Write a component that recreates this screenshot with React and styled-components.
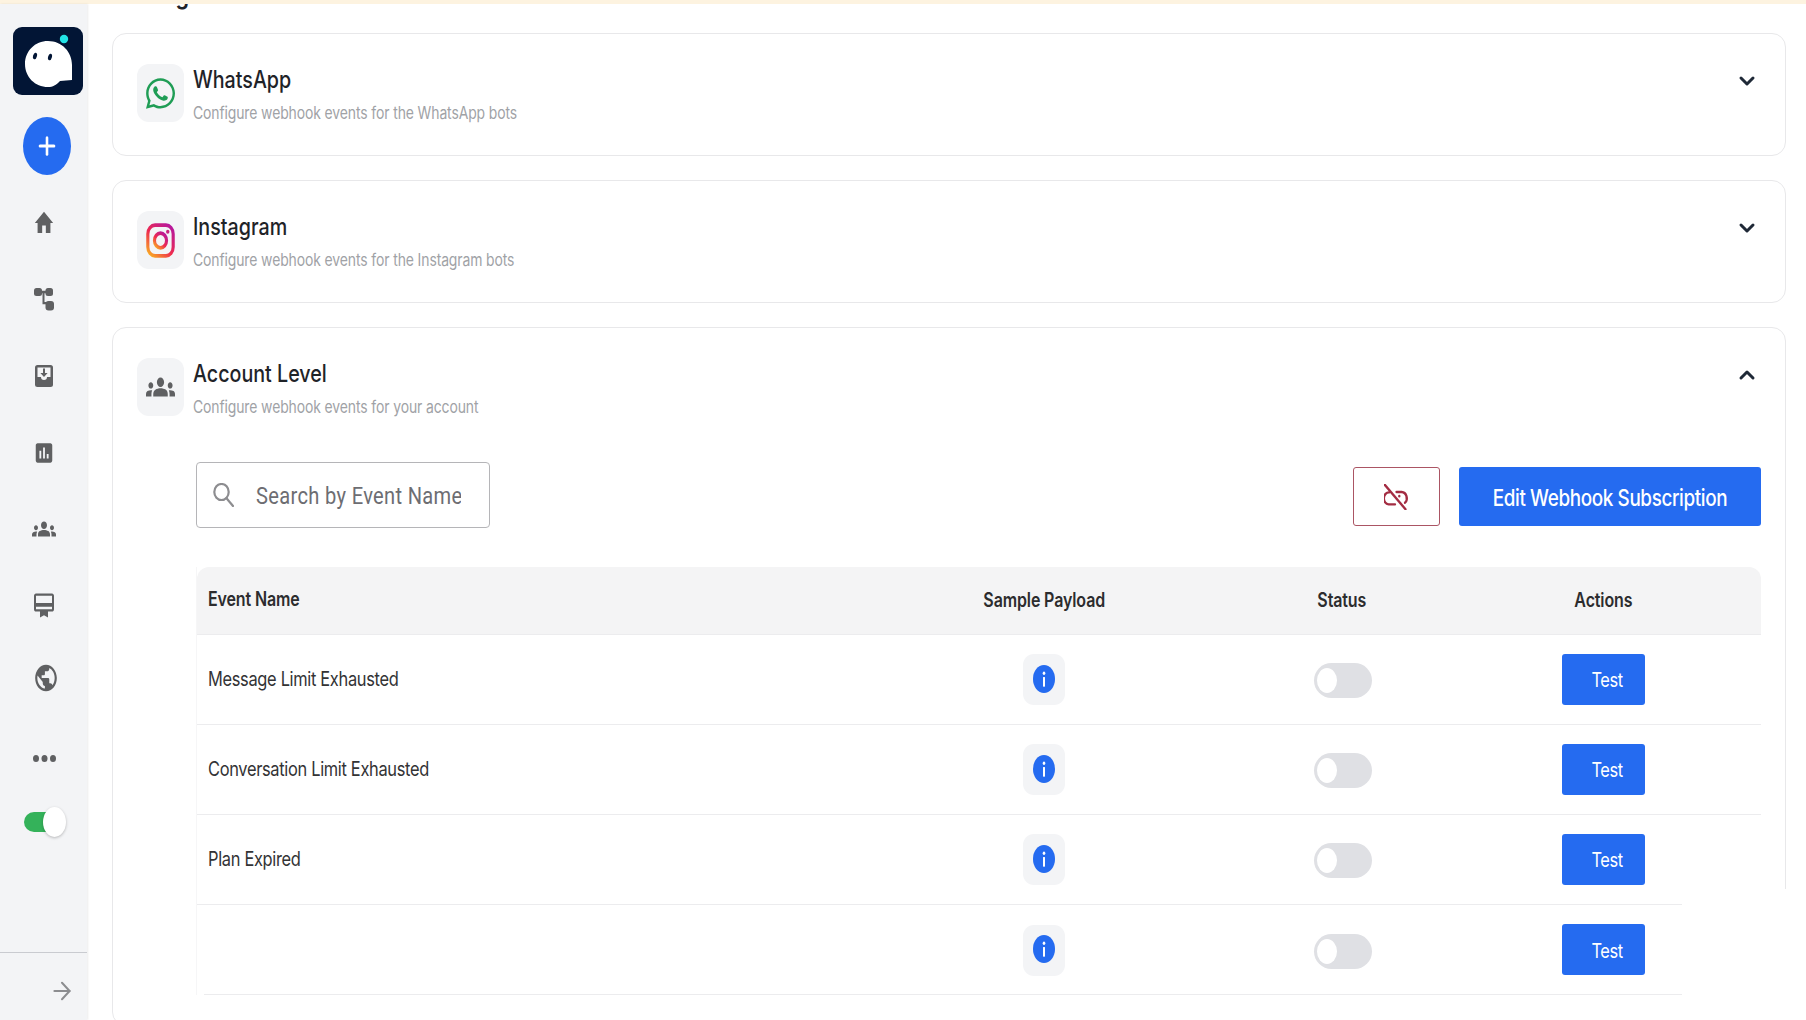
import React from "react";
import styled, { createGlobalStyle } from "styled-components";
import { FaWhatsapp } from "react-icons/fa";
import { MdHome, MdGroups, MdPublic, MdAssessment, MdCardMembership } from "react-icons/md";
import { ArrowRight, ChevronDown, ChevronUp, Plus } from "lucide-react";

const BLUE = "#256bf0";
const ICON_GREY = "#5f6062";

const GlobalStyle = createGlobalStyle`
  html, body { margin: 0; padding: 0; background: #fff; }
  body { font-family: Inter, "Liberation Sans", sans-serif; }
  * { box-sizing: border-box; }
`;

const Page = styled.div`
  position: relative;
  width: 100%;
  height: 100vh;
  display: flex;
  flex-direction: column;
  overflow: hidden;
`;

const Banner = styled.div`
  height: 4px;
  flex: none;
  background: #fdf3e0;
`;

const Body = styled.div`
  flex: 1;
  min-height: 0;
  display: flex;
`;

/* the capture is narrower than it is tall, so glyphs get squeezed the same way */
const Squeezed = styled.span`
  display: inline-block;
  white-space: nowrap;
  transform: scaleX(0.82);
  transform-origin: ${(p) => (p.$center ? "center" : "left center")};
`;

const IconFrame = styled.span`
  display: block;
  flex: none;
  width: ${(p) => p.$w}px;
  height: ${(p) => p.$h}px;
  svg {
    display: block;
    width: 100%;
    height: 100%;
  }
`;

const Sidebar = styled.aside`
  width: 87px;
  flex: none;
  display: flex;
  flex-direction: column;
  align-items: flex-start;
  padding-top: 23px;
  background: #f3f4f6;
  box-shadow: 1px 0 2px rgba(0, 0, 0, 0.08);
  z-index: 1;
`;

const Logo = styled.div`
  width: 70px;
  height: 68px;
  margin-left: 13px;
  border-radius: 9px;
  background: #021535;
  svg { display: block; }
`;

const AddButton = styled.button`
  width: 48px;
  height: 58px;
  margin: 22px 0 0 23px;
  padding: 0;
  border: none;
  border-radius: 50%;
  background: ${BLUE};
  color: #fff;
  display: flex;
  align-items: center;
  justify-content: center;
`;

const NavList = styled.nav`
  width: 88px;
  margin-top: 10px;
  display: flex;
  flex-direction: column;
`;

const NavItem = styled.div`
  height: 76.5px;
  margin: ${(p) => -(p.$lift || 0)}px 0 ${(p) => p.$lift || 0}px;
  padding-left: ${(p) => p.$nudge || 0}px;
  display: flex;
  align-items: center;
  justify-content: center;
  color: ${ICON_GREY};
`;

const SideSwitch = styled.div`
  position: relative;
  width: 36px;
  height: 20px;
  margin: 15px 0 0 24px;
  border-radius: 10px 0 0 10px;
  background: #34b25a;
`;

const SideKnob = styled.span`
  position: absolute;
  top: -5px;
  right: -6px;
  width: 23px;
  height: 30px;
  border-radius: 50%;
  background: #fff;
  box-shadow: 0 1px 3px rgba(0, 0, 0, 0.25);
`;

const SideFooter = styled.div`
  width: 100%;
  margin-top: auto;
  height: 68px;
  display: flex;
  align-items: center;
  justify-content: flex-end;
  padding: 8px 12px 0 0;
  border-top: 1px solid #c9cbd0;
  color: #8c8d90;
`;

const Main = styled.main`
  flex: 1;
  min-width: 0;
  overflow: hidden;
  padding: 0 20px 0 25px;
  background: #fff;
`;

const PageTitle = styled.h1`
  margin: -25px 0 24px;
  height: 30px;
  font-size: 26.5px;
  line-height: 30px;
  font-weight: 600;
  letter-spacing: 0.6px;
  color: #1f2328;
`;

const Card = styled.section`
  min-height: 123px;
  margin-bottom: 24px;
  padding: 30px 24px;
  border: 1px solid #e8e8ea;
  border-radius: 14px;
  background: #fff;
`;

const CardHeader = styled.header`
  display: flex;
  align-items: flex-start;
  gap: 9px;
`;

const IconTile = styled.div`
  width: 47px;
  height: 58px;
  flex: none;
  display: flex;
  align-items: center;
  justify-content: center;
  border-radius: 12px;
  background: #f3f4f6;
  color: ${ICON_GREY};
`;

const CardText = styled.div`
  display: flex;
  flex-direction: column;
  padding-top: 3px;
`;

const CardTitle = styled.h2`
  margin: 0;
  font-size: 24px;
  line-height: 26px;
  font-weight: 500;
  color: #1f2328;
`;

const CardSub = styled.p`
  margin: 9px 0 0;
  font-size: 17px;
  line-height: 22px;
  letter-spacing: -0.13px;
  color: #a0a2a6;
`;

const Caret = styled.div`
  margin: 5px 2px 0 auto;
  color: #1f2937;
  display: flex;
`;

const CardBody = styled.div`
  margin: 44px 0 0 59px;
`;

const Toolbar = styled.div`
  display: flex;
  align-items: center;
  justify-content: space-between;
`;

const SearchBox = styled.label`
  width: 294px;
  height: 66px;
  display: flex;
  align-items: center;
  gap: 22px;
  padding: 0 0 0 16px;
  border: 1px solid #b5b5b8;
  border-radius: 4px;
  overflow: hidden;
  svg { flex: none; }
`;

const SearchInput = styled.input`
  flex: none;
  width: 250px;
  border: none;
  outline: none;
  padding: 0;
  background: transparent;
  font-family: Roboto, "Liberation Sans", sans-serif;
  font-size: 24.5px;
  letter-spacing: 0.4px;
  transform: scaleX(0.82);
  transform-origin: left center;
  &::placeholder { color: #6d6d72; opacity: 1; }
`;

const ToolbarActions = styled.div`
  display: flex;
  gap: 19px;
  padding-top: 3px;
`;

const UnlinkButton = styled.button`
  width: 87px;
  height: 59px;
  padding: 0;
  display: flex;
  align-items: center;
  justify-content: center;
  border: 1px solid #ab5564;
  border-radius: 3px;
  background: #fff;
  color: #a32c42;
`;

const PrimaryButton = styled.button`
  width: 302px;
  height: 59px;
  border: none;
  border-radius: 3px;
  background: ${BLUE};
  color: #fff;
  font-family: Inter, "Liberation Sans", sans-serif;
  font-size: 23px;
  font-weight: 500;
  letter-spacing: -0.45px;
  display: flex;
  align-items: center;
  justify-content: center;
  padding: 3px 0 0;
`;

const Table = styled.div`
  margin-top: 39px;
  border-left: 1px solid #f6f6f7;
`;

const columns = "747px 200px 395px 128px 95px";

const HeadRow = styled.div`
  height: 68px;
  display: grid;
  grid-template-columns: ${columns};
  align-items: center;
  padding-bottom: 2px;
  border-radius: 12px 12px 0 0;
  border-bottom: 1px solid #ececee;
  background: #f4f4f5;
  font-size: 19.5px;
  font-weight: 600;
  letter-spacing: -0.15px;
  color: #2c2c2e;
`;

const Row = styled.div`
  height: 90px;
  display: grid;
  grid-template-columns: ${columns};
  align-items: center;
  background: ${(p) => (p.$last ? "linear-gradient(#ececee, #ececee) 7px 100% / 100% 1px no-repeat" : "none")};
  border-bottom: ${(p) => (p.$last ? "none" : "1px solid #ececee")};
  font-size: 20px;
  letter-spacing: -0.38px;
  color: #333335;
`;

const NameCell = styled.div`
  padding-left: 11px;
  margin-top: -1px;
`;

const Cell = styled.div`
  display: flex;
  justify-content: center;
`;

const InfoTile = styled.div`
  width: 42px;
  height: 51px;
  display: flex;
  align-items: center;
  justify-content: center;
  padding-bottom: 2px;
  border-radius: 11px;
  background: #f3f4f6;
`;

const Switch = styled.div`
  width: 58px;
  height: 35px;
  margin-top: 2px;
  padding: 5px 3px;
  border-radius: 18px;
  background: #dfe0e4;
  transform: translateX(1px);
`;

const Knob = styled.span`
  display: block;
  width: 20px;
  height: 25px;
  border-radius: 50%;
  background: #fff;
`;

const TestButton = styled.button`
  width: 83px;
  height: 51px;
  margin-top: -1px;
  padding: 2px 0 0 8px;
  border: none;
  border-radius: 3px;
  background: ${BLUE};
  color: #fff;
  font-family: Inter, "Liberation Sans", sans-serif;
  font-size: 20px;
  letter-spacing: -0.5px;
`;

/* white patch that hides the lower right of the capture */
const CornerPatch = styled.div`
  position: absolute;
  right: 0;
  bottom: 0;
  width: 124px;
  height: 131px;
  background: #fff;
  z-index: 2;
`;

const Stretch = ({ as: Icon, w, h, ...rest }) => (
  <IconFrame $w={w} $h={h}>
    <Icon preserveAspectRatio="none" {...rest} />
  </IconFrame>
);

const GhostLogo = () => (
  <svg width="70" height="68" viewBox="0 0 70 68">
    <path d="M35 14C49 14 59 25 59 38V53L47 54C43 58 40 60 35 60C22 60 12 50 12 37C12 24 22 14 35 14Z" fill="#fff" />
    <ellipse cx="22" cy="29" rx="1.9" ry="3.4" fill="#021535" transform="rotate(15 22 29)" />
    <ellipse cx="37" cy="30" rx="1.9" ry="3.4" fill="#021535" transform="rotate(15 37 30)" />
    <circle cx="51" cy="12" r="4.2" fill="#22e3e6" />
  </svg>
);

const HubIcon = () => (
  <svg width="20" height="23" viewBox="0 0 20 23" fill={ICON_GREY}>
    <rect x="0" y="0" width="8" height="8" rx="2.5" />
    <rect x="11.5" y="0" width="7.5" height="8" rx="2.5" />
    <rect x="11.5" y="13" width="8.5" height="9.5" rx="3" />
    <path d="M7 2.8h5v2.4H7zM8.5 5h2v9H13v2.2H8.5z" />
  </svg>
);

const InboxIcon = () => (
  <svg width="18" height="22" viewBox="0 0 18 22">
    <rect width="18" height="22" rx="2.5" fill={ICON_GREY} />
    <path d="M2.5 2.5h13v9.5h-3.5a3 3 0 0 1-6 0H2.5z" fill="#f3f4f6" />
    <path d="M8 3.5h2v4.5h2.6L9 12 5.4 8H8z" fill={ICON_GREY} />
  </svg>
);

const DotsIcon = () => (
  <svg width="23" height="7" viewBox="0 0 23 7" fill={ICON_GREY}>
    <ellipse cx="3" cy="3.5" rx="3" ry="3.5" />
    <ellipse cx="11.5" cy="3.5" rx="3" ry="3.5" />
    <ellipse cx="20" cy="3.5" rx="3" ry="3.5" />
  </svg>
);

const SearchGlyph = () => (
  <svg width="21" height="24" viewBox="0 0 21 24" fill="none" stroke="#8d8d90" strokeWidth="2.2">
    <ellipse cx="8.5" cy="9" rx="7.2" ry="8" />
    <path d="M13.5 15.2L20 23" strokeLinecap="round" />
  </svg>
);

const UnlinkGlyph = () => (
  <svg width="25" height="26" viewBox="0 0 25 26" fill="none" stroke="currentColor" strokeWidth="2.3" strokeLinecap="round">
    <path d="M5.2 8.4A5 6 0 0 0 4.6 20.4H11" />
    <path d="M12.5 8H17.6A5.4 6.2 0 0 1 21 18.8" />
    <path d="M0.8 0.8L21.5 25.2" />
    <path d="M15.3 12v0.4" />
  </svg>
);

const InstagramIcon = () => (
  <svg width="29" height="35" viewBox="0 0 24 24" preserveAspectRatio="none" fill="none">
    <defs>
      <linearGradient id="igGrad" x1="0.1" y1="1" x2="0.9" y2="0">
        <stop offset="0" stopColor="#f9a825" />
        <stop offset="0.45" stopColor="#ee2a4f" />
        <stop offset="1" stopColor="#b5179e" />
      </linearGradient>
    </defs>
    <rect x="1.5" y="1.5" width="21" height="21" rx="6" stroke="url(#igGrad)" strokeWidth="2.6" />
    <circle cx="12" cy="12" r="5" stroke="url(#igGrad)" strokeWidth="2.6" />
    <circle cx="18" cy="6" r="1.4" fill="#c9237f" />
  </svg>
);

const InfoIcon = () => (
  <svg width="22" height="28" viewBox="0 0 22 22" preserveAspectRatio="none">
    <circle cx="11" cy="11" r="11" fill={BLUE} />
    <rect x="10" y="9.5" width="2" height="7.5" fill="#fff" />
    <circle cx="11" cy="6.5" r="1.3" fill="#fff" />
  </svg>
);

const navItems = [
  { icon: <Stretch as={MdHome} w={22} h={30} /> },
  { icon: <HubIcon /> },
  { icon: <InboxIcon /> },
  { icon: <Stretch as={MdAssessment} w={22} h={26} /> },
  { icon: <Stretch as={MdGroups} w={24} h={30} /> },
  { icon: <Stretch as={MdCardMembership} w={24} h={29} /> },
  { icon: <Stretch as={MdPublic} w={26} h={32} />, lift: 4, nudge: 3 },
  { icon: <DotsIcon /> },
];

const events = ["Message Limit Exhausted", "Conversation Limit Exhausted", "Plan Expired", ""];

function CardHead({ icon, title, sub, open }) {
  return (
    <CardHeader>
      <IconTile>{icon}</IconTile>
      <CardText>
        <CardTitle>
          <Squeezed>{title}</Squeezed>
        </CardTitle>
        <CardSub>
          <Squeezed>{sub}</Squeezed>
        </CardSub>
      </CardText>
      <Caret>
        <Stretch as={open ? ChevronUp : ChevronDown} w={24} h={24} strokeWidth={3} />
      </Caret>
    </CardHeader>
  );
}

export default function App() {
  return (
    <Page>
      <GlobalStyle />
      <Banner />
      <Body>
        <Sidebar>
          <Logo>
            <GhostLogo />
          </Logo>
          <AddButton aria-label="Create">
            <Stretch as={Plus} w={24} h={28} strokeWidth={2.6} />
          </AddButton>
          <NavList>
            {navItems.map((item, i) => (
              <NavItem key={i} $lift={item.lift} $nudge={item.nudge}>
                {item.icon}
              </NavItem>
            ))}
          </NavList>
          <SideSwitch>
            <SideKnob />
          </SideSwitch>
          <SideFooter>
            <Stretch as={ArrowRight} w={26} h={28} strokeWidth={1.9} />
          </SideFooter>
        </Sidebar>
        <Main>
          <PageTitle>
            <Squeezed>Settings</Squeezed>
          </PageTitle>
          <Card>
            <CardHead
              icon={<Stretch as={FaWhatsapp} w={29} h={35} color="#1f9d55" />}
              title="WhatsApp"
              sub="Configure webhook events for the WhatsApp bots"
            />
          </Card>
          <Card>
            <CardHead
              icon={<InstagramIcon />}
              title="Instagram"
              sub="Configure webhook events for the Instagram bots"
            />
          </Card>
          <Card>
            <CardHead
              icon={<Stretch as={MdGroups} w={29} h={38} />}
              title="Account Level"
              sub="Configure webhook events for your account"
              open
            />
            <CardBody>
              <Toolbar>
                <SearchBox>
                  <SearchGlyph />
                  <SearchInput placeholder="Search by Event Name" />
                </SearchBox>
                <ToolbarActions>
                  <UnlinkButton aria-label="Unlink webhook">
                    <UnlinkGlyph />
                  </UnlinkButton>
                  <PrimaryButton>
                    <Squeezed $center>Edit Webhook Subscription</Squeezed>
                  </PrimaryButton>
                </ToolbarActions>
              </Toolbar>
              <Table>
                <HeadRow>
                  <NameCell>
                    <Squeezed>Event Name</Squeezed>
                  </NameCell>
                  <Cell>
                    <Squeezed $center>Sample Payload</Squeezed>
                  </Cell>
                  <Cell>
                    <Squeezed $center>Status</Squeezed>
                  </Cell>
                  <Cell>
                    <Squeezed $center>Actions</Squeezed>
                  </Cell>
                </HeadRow>
                {events.map((name, i) => (
                  <Row key={i} $last={i === events.length - 1}>
                    <NameCell>
                      <Squeezed>{name}</Squeezed>
                    </NameCell>
                    <Cell>
                      <InfoTile>
                        <InfoIcon />
                      </InfoTile>
                    </Cell>
                    <Cell>
                      <Switch>
                        <Knob />
                      </Switch>
                    </Cell>
                    <Cell>
                      <TestButton>
                        <Squeezed $center>Test</Squeezed>
                      </TestButton>
                    </Cell>
                  </Row>
                ))}
              </Table>
            </CardBody>
          </Card>
        </Main>
      </Body>
      <CornerPatch />
    </Page>
  );
}
